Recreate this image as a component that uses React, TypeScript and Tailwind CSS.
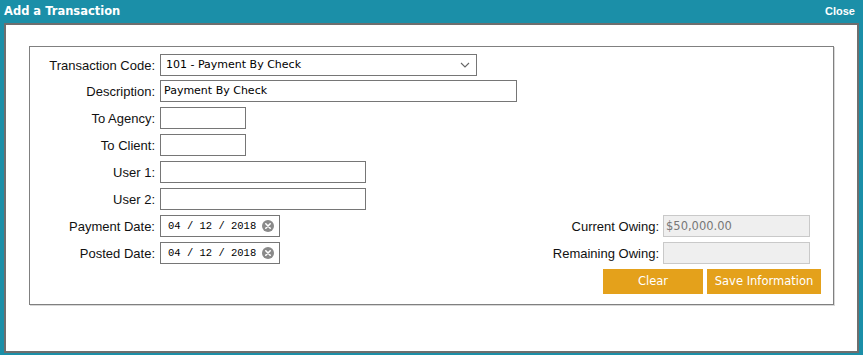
const label = "w-[125px] shrink-0 pt-[2px] text-right text-[13px] text-[#111] [font-family:'Liberation_Sans',Arial,sans-serif]";
const sideLabel = "pt-[2px] text-[13px] text-[#111] [font-family:'Liberation_Sans',Arial,sans-serif]";
const field =
  "h-[22px] border border-[#767676] bg-white px-[3px] text-[11px] text-black leading-[20px] [font-family:'DejaVu_Sans',sans-serif]";

const ClearIcon = () => (
  <svg width="12" height="12" viewBox="0 0 12 12" className="shrink-0">
    <circle cx="6" cy="6" r="6" fill="#8a8a8a" />
    <path d="M3.8 3.8 8.2 8.2M8.2 3.8 3.8 8.2" stroke="#fff" strokeWidth="1.6" strokeLinecap="round" />
  </svg>
);

const DateField = ({ value }: { value: string }) => (
  <div className={`${field} flex w-[120px] items-center justify-between pl-[7px] pr-[5px]`}>
    <span className="text-[10.5px] [font-family:'Liberation_Mono',monospace]">{value}</span>
    <ClearIcon />
  </div>
);

const Row = ({ text, children }: { text: string; children: React.ReactNode }) => (
  <div className="flex h-[22px] items-center gap-[5px]">
    <span className={label}>{text}</span>
    {children}
  </div>
);

const App = () => {
  return (
    <div className="flex h-[355px] w-[863px] flex-col bg-[#1b8fa8]">
      <div className="flex h-[23px] items-center justify-between pl-[4px] pr-[8px] text-white">
        <span className="text-[11.5px] font-bold [font-family:'DejaVu_Sans',sans-serif]">Add a Transaction</span>
        <span className="text-[11px] font-bold [font-family:'Liberation_Sans',Arial,sans-serif]">Close</span>
      </div>
      <div className="mx-[4px] mb-[2px] flex-1 border-2 border-[#6e6e6e] bg-white pl-[23px] pr-[23px] pt-[21px]">
        <div className="flex flex-col gap-[5px] border border-[#808080] pb-[10px] pr-[12px] pt-[7px] shadow-[1px_1px_0_#d8d8d8]">
          <div className="flex h-[21px] items-center gap-[5px]">
            <span className={label}>Transaction Code:</span>
            <div className={`${field} flex h-[21px] w-[317px] items-center justify-between pl-[5px] pr-[6px]`}>
              <span>101 - Payment By Check</span>
              <svg width="10" height="6" viewBox="0 0 10 6">
                <path d="M1 1 5 5 9 1" fill="none" stroke="#666" strokeWidth="1.1" />
              </svg>
            </div>
          </div>
          <Row text="Description:">
            <div className={`${field} w-[357px]`}>Payment By Check</div>
          </Row>
          <Row text="To Agency:">
            <div className={`${field} w-[86px]`} />
          </Row>
          <Row text="To Client:">
            <div className={`${field} w-[86px]`} />
          </Row>
          <Row text="User 1:">
            <div className={`${field} w-[206px]`} />
          </Row>
          <Row text="User 2:">
            <div className={`${field} w-[206px]`} />
          </Row>
          <div className="flex h-[22px] items-center">
            <Row text="Payment Date:">
              <DateField value="04 / 12 / 2018" />
            </Row>
            <div className="ml-auto flex items-center gap-[4px] pr-[11px]">
              <span className={sideLabel}>Current Owing:</span>
              <div className="h-[22px] w-[147px] border border-[#c9c9c9] bg-[#efefef] px-[2px] text-[11.5px] leading-[20px] text-[#777] [font-family:'DejaVu_Sans',sans-serif]">
                $50,000.00
              </div>
            </div>
          </div>
          <div className="flex h-[22px] items-center">
            <Row text="Posted Date:">
              <DateField value="04 / 12 / 2018" />
            </Row>
            <div className="ml-auto flex items-center gap-[4px] pr-[11px]">
              <span className={sideLabel}>Remaining Owing:</span>
              <div className="h-[22px] w-[147px] border border-[#c9c9c9] bg-[#efefef]" />
            </div>
          </div>
          <div className="flex justify-end gap-[4px]">
            <button className="h-[25px] w-[100px] bg-[#e4a11b] text-[11.5px] text-white [font-family:'DejaVu_Sans',sans-serif]">
              Clear
            </button>
            <button className="h-[25px] w-[114px] bg-[#e4a11b] text-[11.5px] text-white [font-family:'DejaVu_Sans',sans-serif]">
              Save Information
            </button>
          </div>
        </div>
      </div>
    </div>
  );
};

export default App;
